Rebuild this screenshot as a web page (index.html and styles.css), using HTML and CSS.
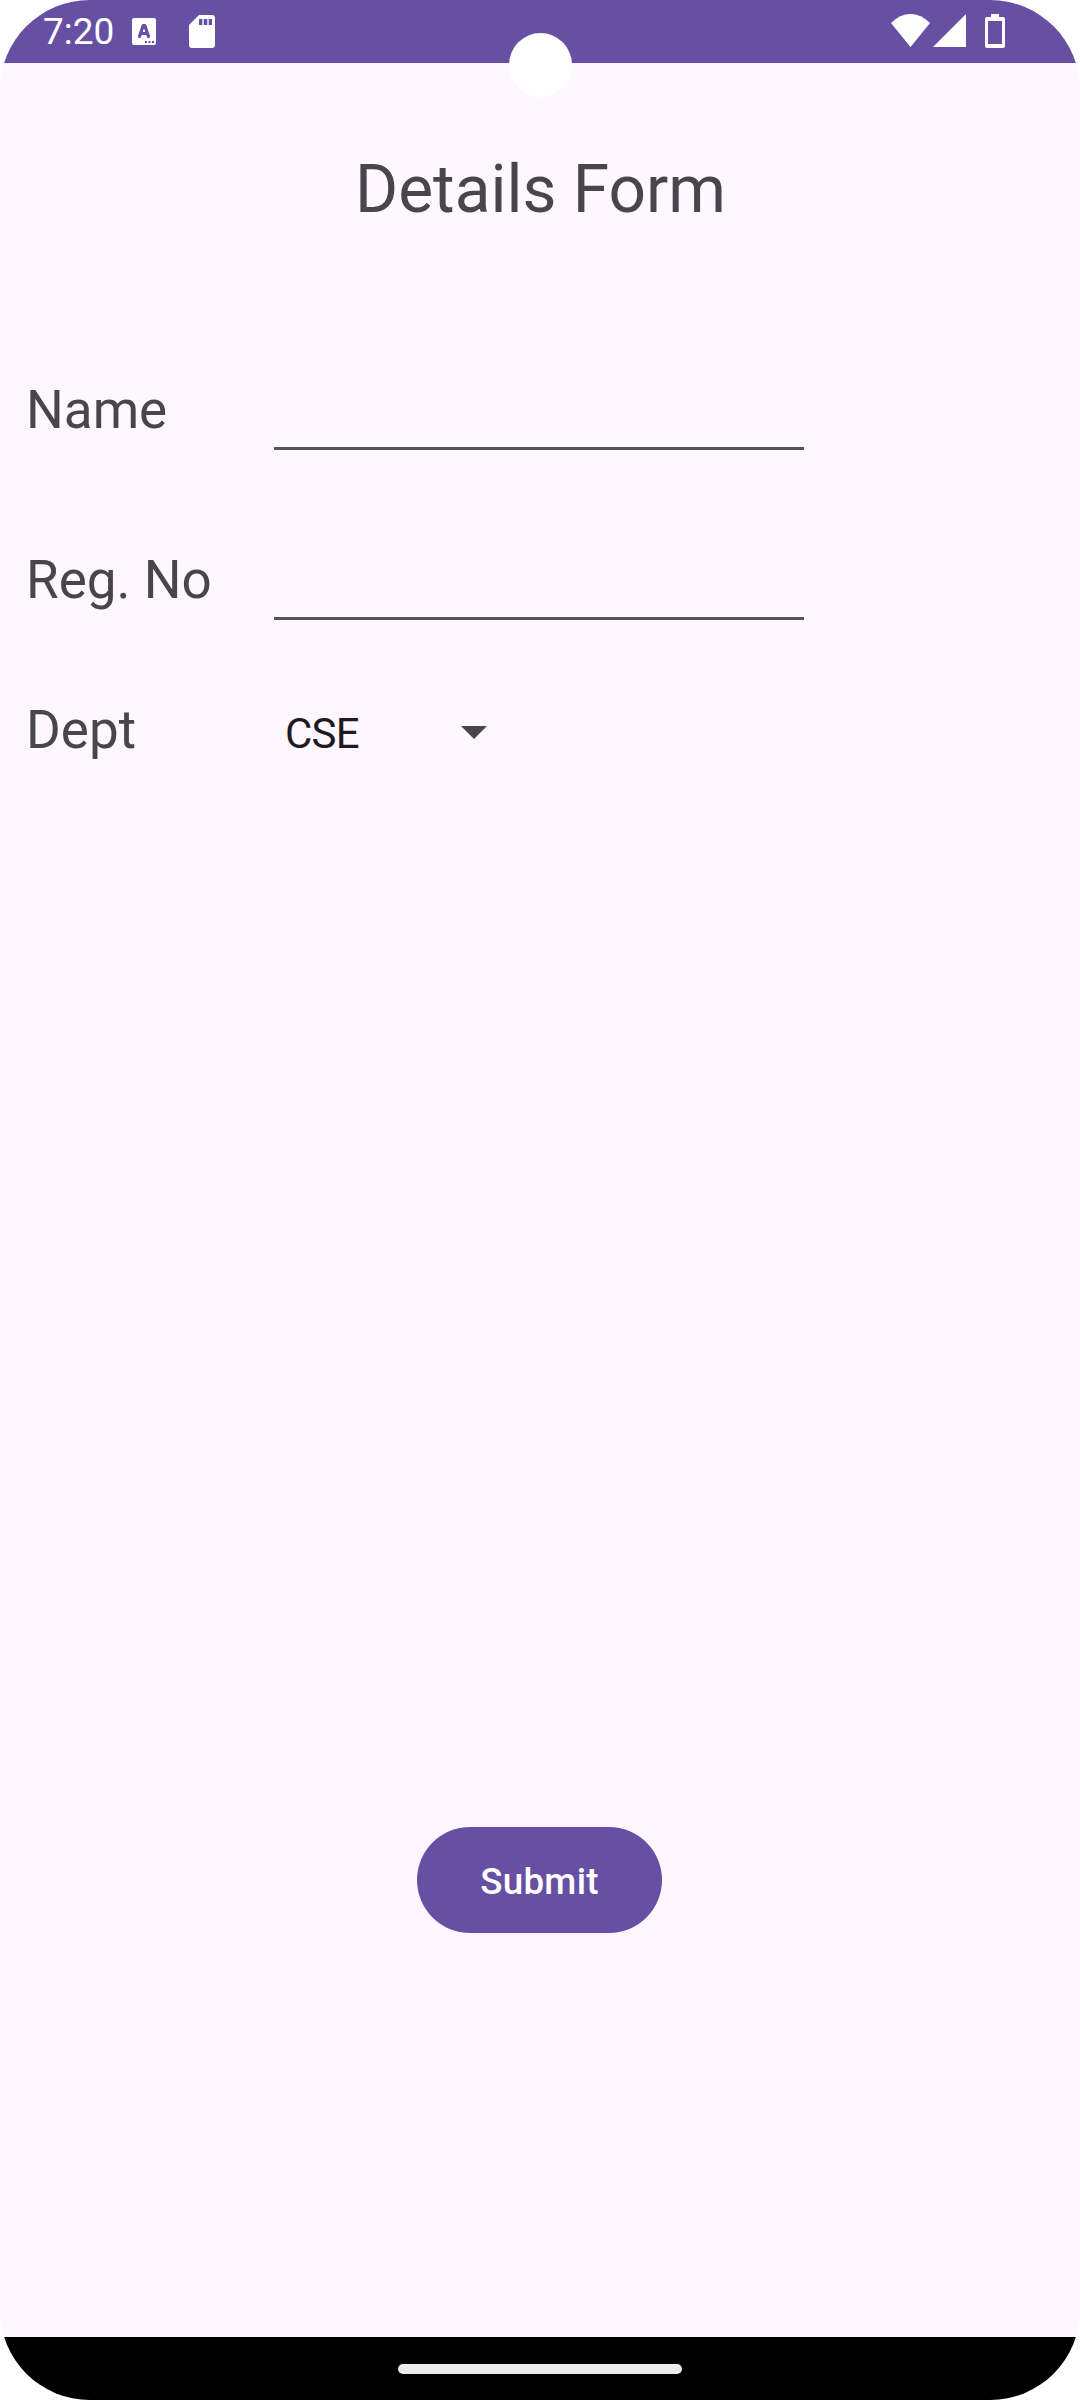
FILE: index.html
```html
<!DOCTYPE html>
<html lang="en">
<head>
<meta charset="utf-8">
<title>Details Form</title>
<link rel="stylesheet" href="styles.css">
</head>
<body>
<div class="screen">
  <header class="status">
    <span class="time">7:20</span>
    <svg class="ic-lang" width="24" height="27" viewBox="0 0 24 27"><rect width="24" height="27" rx="2" fill="#fff"/><path d="M7.500 18.500 11.200 7.500h1.600l3.700 11M9 15.500h6" fill="none" stroke="#6750a3" stroke-width="3.200" stroke-linecap="round" stroke-linejoin="round"/><path d="M13 23h2v2h-2zM16.500 23h2v2h-2zM20 23h2v2h-2z" fill="#6750a3"/></svg>
    <svg class="ic-sd" width="26" height="33" viewBox="0 0 26 33"><path d="M10 0h13a3 3 0 0 1 3 3v27a3 3 0 0 1-3 3H3a3 3 0 0 1-3-3V10z" fill="#fff"/><path d="M10 4h3.300v6H10zM14.700 4h3.600v6h-3.600zM19.700 4h3.300v6h-3.300z" fill="#6750a3"/></svg>
    <svg class="ic-wifi" width="39" height="33" viewBox="0 0 39 33"><path d="M0 9Q9 0 19.500 0T39 9L19.500 33z" fill="#fff"/></svg>
    <svg class="ic-cell" width="33" height="33" viewBox="0 0 33 33"><path d="M33 0v33H0z" fill="#fff"/></svg>
    <svg class="ic-batt" width="20" height="34" viewBox="0 0 20 34"><path fill-rule="evenodd" d="M6 0h8v3h4a2 2 0 0 1 2 2v27a2 2 0 0 1-2 2H2a2 2 0 0 1-2-2V5a2 2 0 0 1 2-2h4zM3 7v23h14V7z" fill="#fff"/></svg>
    <span class="camera"></span>
  </header>
  <main class="content">
    <h1 class="title">Details Form</h1>
    <form class="form">
      <label class="row"><span class="label">Name</span><input class="field" type="text"></label>
      <label class="row"><span class="label">Reg. No</span><input class="field" type="text"></label>
      <div class="row row-dept"><span class="label">Dept</span>
        <div class="spinner"><span>CSE</span><svg width="26" height="13" viewBox="0 0 26 13"><path d="M0 0h26L13 13z" fill="#49454f"/></svg></div>
      </div>
      <button class="submit" type="button">Submit</button>
    </form>
  </main>
  <footer class="nav"><span class="handle"></span></footer>
</div>
</body>
</html>
```
FILE: styles.css
```css
* { box-sizing: border-box; }
body { margin: 0; background: #fff; font-family: Roboto, sans-serif; }
.screen { display: flex; flex-direction: column; width: 1080px; height: 2400px; overflow: hidden; border-radius: 90px; background: #fef7ff; color: #49454f; }
.status { position: relative; display: flex; align-items: flex-start; flex: none; height: 63px; padding-left: 43px; background: #6750a3; color: #fff; }
.time { width: 89px; padding-top: 10px; font-size: 37px; line-height: 44px; }
.ic-lang { margin-top: 18px; }
.ic-sd { margin: 15px 0 0 33px; }
.ic-wifi { margin: 14px 0 0 676px; }
.ic-cell { margin: 14px 0 0 3px; }
.ic-batt { margin: 14px 0 0 19px; }
.camera { position: absolute; left: 509px; top: 33px; width: 63px; height: 64px; border-radius: 50%; background: #fff; }
.content { flex: 1; padding-top: 88px; }
.title { margin: 0; padding-left: 1px; font-size: 65.800px; font-weight: 400; line-height: 78px; text-align: center; }
.form { display: flex; flex-direction: column; padding: 149px 26px 0; }
.row { display: flex; height: 170px; }
.label { width: 248px; font-size: 53px; line-height: 64px; }
.field { width: 530px; height: 72px; padding: 0; border: 0; border-bottom: 3px solid #56525c; background: none; font: 42px Roboto, sans-serif; outline: none; }
.row-dept { height: 128px; margin-top: -20px; }
.spinner { display: flex; align-items: flex-start; justify-content: space-between; width: 202px; margin-left: 11px; padding-top: 10px; color: #1d1b20; font-size: 42px; line-height: 52px; letter-spacing: -0.800px; }
.spinner svg { margin-top: 18px; }
.submit { align-self: center; width: 245px; height: 106px; margin: 1001px 1px 0 0; padding: 2px 0 0; border: 0; border-radius: 53px; background: #6750a3; color: #fff; font: 500 36.750px Roboto, sans-serif; letter-spacing: 0.260px; }
.nav { display: flex; flex: none; justify-content: center; height: 63px; padding-top: 27px; background: #000; }
.handle { width: 284px; height: 10px; border-radius: 5px; background: #ebebeb; }
```
